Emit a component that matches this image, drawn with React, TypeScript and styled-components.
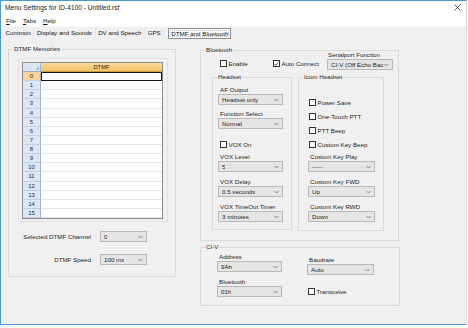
import React from 'react';
import styled, { createGlobalStyle } from 'styled-components';

const Global = createGlobalStyle`
  html, body { margin: 0; padding: 0; background: #ffffff; }
  body { font-family: "Liberation Sans", Arial, sans-serif; font-size: 6.2px; color: #1c1c1c; }
  * { box-sizing: border-box; }
`;

const Window = styled.div`
  width: 467px;
  height: 325px;
  border: 1px solid #4a98dc;
  border-right-color: #dcdcdc;
  display: flex;
  flex-direction: column;
  background: #f0f0f0;
  overflow: hidden;
`;

const TitleBar = styled.div`
  height: 12px;
  background: #fff;
  display: flex;
  align-items: center;
  justify-content: space-between;
  padding: 0 5px 0 4px;
  font-size: 6.6px;
  color: #222;
`;

const MenuBar = styled.div`
  height: 13px;
  background: #fff;
  display: flex;
  align-items: center;
  gap: 7px;
  padding: 1px 0 0 5px;
  color: #111;
  u { text-decoration: underline; text-underline-offset: 1px; }
`;

const TabStrip = styled.div`
  height: 13px;
  display: flex;
  align-items: flex-start;
  padding: 1px 0 0 2px;
  background: #f0f0f0;
  border-top: 1px solid #f7f7f7;
`;

const Tab = styled.div<{ $active?: boolean }>`
  height: 11px;
  line-height: 10px;
  padding: 0 2.6px;
  color: #111;
  ${(p) =>
    p.$active
      ? `margin-left: 4px; background: #fbfbfb; border: 1px solid #8e8e8e; padding: 0 2px; outline: 1px dotted #bbb; outline-offset: -3px;`
      : `border-right: 1px solid #e6e6e6;`}
`;

const Panel = styled.div`
  flex: 1;
  display: flex;
  align-items: flex-start;
  gap: 24px;
  padding: 6px 0 0 7px;
`;

const Group = styled.fieldset<{ $w: number; $h: number }>`
  margin: 0;
  min-width: 0;
  width: ${(p) => p.$w}px;
  height: ${(p) => p.$h}px;
  padding: 0;
  border: 1px solid #d9d9d9;
`;

const Legend = styled.legend`
  font-size: 6.2px;
  line-height: 8px;
  padding: 0 1px;
  margin-left: 4px;
  color: #1c1c1c;
`;

const GroupBody = styled.div<{ $pad: string }>`
  display: flex;
  flex-direction: column;
  padding: ${(p) => p.$pad};
`;

const GridFrame = styled.div`
  align-self: flex-start;
  border: 1px solid #e2e2e2;
  padding: 3px 4px 2px 3px;
`;

const DataGrid = styled.div`
  display: grid;
  grid-template-columns: 18px 121px;
  grid-template-rows: 9px repeat(16, 9.125px);
  border: 1px solid #8c8c8c;
  background: #fff;
  width: 141px;
`;

const CornerCell = styled.div`
  background: #dbe5f3;
  border-right: 1px solid #9fb0c6;
  border-bottom: 1px solid #9fb0c6;
  display: flex;
  justify-content: flex-end;
  align-items: flex-end;
  padding: 1px;
`;

const ColHeader = styled.div`
  background: linear-gradient(#f9d99c, #f3c163);
  border-bottom: 1px solid #c69b4b;
  text-align: center;
  line-height: 8px;
  font-size: 5.8px;
  color: #222;
`;

const RowHeader = styled.div<{ $sel?: boolean }>`
  background: ${(p) => (p.$sel ? '#f8d69a' : '#dce6f4')};
  border-right: 1px solid #9fb0c6;
  border-bottom: 1px solid #c4d0e2;
  text-align: center;
  line-height: 8px;
  font-size: 6px;
  color: #2a2a2a;
`;

const Cell = styled.div<{ $cur?: boolean }>`
  border-bottom: 1px solid #e6e6e6;
  ${(p) => (p.$cur ? 'border: 1.5px solid #111;' : '')}
`;

const FormRows = styled.div`
  display: grid;
  grid-template-columns: 73px 47px;
  column-gap: 9px;
  row-gap: 12px;
  margin-top: 9px;
  align-items: center;
`;

const RowLabel = styled.div`
  text-align: right;
  line-height: 8px;
`;

const SelectBox = styled.div<{ $w: number }>`
  width: ${(p) => p.$w}px;
  height: 11px;
  border: 1px solid #b8b8b8;
  background: #e5e5e5;
  display: flex;
  align-items: center;
  justify-content: space-between;
  padding: 0 3px 0 3px;
  line-height: 9px;
  color: #1c1c1c;
  white-space: nowrap;
  overflow: hidden;
  span { overflow: hidden; }
  svg { flex: none; }
`;

const Column = styled.div`
  display: flex;
  flex-direction: column;
  gap: 2px;
  margin-top: 1px;
`;

const TopRow = styled.div`
  display: flex;
  align-items: flex-end;
  margin-top: -3px;
  padding-left: 8px;
`;

const CheckRow = styled.div<{ $w?: number; $indent?: number; $lift?: number }>`
  display: flex;
  align-items: center;
  gap: 1.5px;
  height: 9px;
  flex: none;
  ${(p) => (p.$w ? `width: ${p.$w}px;` : '')}
  margin-left: ${(p) => p.$indent ?? 0}px;
  margin-bottom: ${(p) => p.$lift ?? 0}px;
`;

const Box = styled.span`
  width: 7px;
  height: 7px;
  border: 1px solid #333;
  background: #fff;
  display: inline-flex;
  align-items: center;
  justify-content: center;
  flex: none;
`;

const Field = styled.div`
  display: flex;
  flex-direction: column;
`;

const FieldLabel = styled.div<{ $indent?: number }>`
  line-height: 8px;
  padding-left: ${(p) => p.$indent ?? 2}px;
  white-space: nowrap;
`;

const SubRow = styled.div`
  display: flex;
  gap: 6px;
  margin-top: 3px;
`;

const Stack = styled.div<{ $gap: number; $top?: number }>`
  display: flex;
  flex-direction: column;
  gap: ${(p) => p.$gap}px;
  margin-top: ${(p) => p.$top ?? 0}px;
`;

const CivCols = styled.div`
  display: flex;
  gap: 25px;
  padding-left: 16px;
  padding-top: 2px;
`;

const Chevron = () => (
  <svg width="5" height="4" viewBox="0 0 5 4">
    <path d="M0.5 1 L2.5 3 L4.5 1" fill="none" stroke="#6a6a6a" strokeWidth="0.8" />
  </svg>
);

const Select = ({ w, value }: { w: number; value: string }) => (
  <SelectBox $w={w}>
    <span>{value}</span>
    <Chevron />
  </SelectBox>
);

const Check = ({
  label,
  checked,
  w,
  indent,
  lift,
}: {
  label: string;
  checked?: boolean;
  w?: number;
  indent?: number;
  lift?: number;
}) => (
  <CheckRow $w={w} $indent={indent} $lift={lift}>
    <Box>
      {checked && (
        <svg width="6" height="6" viewBox="0 0 6 6">
          <path d="M0.8 3 L2.3 4.6 L5.2 1" fill="none" stroke="#222" strokeWidth="0.9" />
        </svg>
      )}
    </Box>
    <span>{label}</span>
  </CheckRow>
);

const LabeledSelect = ({ label, value, w, indent }: { label: string; value: string; w: number; indent?: number }) => (
  <Field>
    <FieldLabel $indent={indent}>{label}</FieldLabel>
    <Select w={w} value={value} />
  </Field>
);

const rows = Array.from({ length: 16 }, (_, i) => i);

export default function App() {
  return (
    <>
      <Global />
      <Window>
        <TitleBar>
          <span>Menu Settings for ID-4100 - Untitled.rsf</span>
          <svg width="7" height="7" viewBox="0 0 7 7">
            <path d="M0.5 0.5 L6.5 6.5 M6.5 0.5 L0.5 6.5" stroke="#333" strokeWidth="0.8" />
          </svg>
        </TitleBar>
        <MenuBar>
          <span><u>F</u>ile</span>
          <span><u>T</u>abs</span>
          <span><u>H</u>elp</span>
        </MenuBar>
        <TabStrip>
          <Tab>Common</Tab>
          <Tab>Display and Sounds</Tab>
          <Tab>DV and Speech</Tab>
          <Tab>GPS</Tab>
          <Tab $active>DTMF and Bluetooth</Tab>
        </TabStrip>
        <Panel>
          <Group $w={168} $h={232}>
            <Legend>DTMF Memories</Legend>
            <GroupBody $pad="5px 0 0 9px">
              <GridFrame>
                <DataGrid>
                  <CornerCell>
                    <svg width="4" height="4" viewBox="0 0 4 4">
                      <path d="M4 0 L4 4 L0 4 Z" fill="#a9b8cc" />
                    </svg>
                  </CornerCell>
                  <ColHeader>DTMF</ColHeader>
                  {rows.map((r) => (
                    <React.Fragment key={r}>
                      <RowHeader $sel={r === 0}>{r}</RowHeader>
                      <Cell $cur={r === 0} />
                    </React.Fragment>
                  ))}
                </DataGrid>
              </GridFrame>
              <FormRows>
                <RowLabel>Selected DTMF Channel</RowLabel>
                <Select w={47} value="0" />
                <RowLabel>DTMF Speed</RowLabel>
                <Select w={47} value="100 ms" />
              </FormRows>
            </GroupBody>
          </Group>

          <Column>
            <Group $w={199} $h={195}>
              <Legend>Bluetooth</Legend>
              <GroupBody $pad="0 0 0 11px">
                <TopRow>
                  <Check label="Enable" w={53} lift={2} />
                  <Check label="Auto Connect" checked w={54} lift={2} />
                  <Field>
                    <FieldLabel $indent={1}>Serialport Function</FieldLabel>
                    <Select w={66} value="CI-V (Off Echo Bac" />
                  </Field>
                </TopRow>
                <SubRow>
                  <Group $w={80} $h={157}>
                    <Legend>Headset</Legend>
                    <GroupBody $pad="5px 0 0 5px">
                      <Stack $gap={5}>
                        <LabeledSelect label="AF Output" value="Headset only" w={65} />
                        <LabeledSelect label="Function Select" value="Normal" w={65} />
                      </Stack>
                      <Stack $gap={0} $top={11}>
                        <Check label="VOX On" indent={2} />
                      </Stack>
                      <Stack $gap={6} $top={4}>
                        <LabeledSelect label="VOX Level" value="5" w={65} />
                        <LabeledSelect label="VOX Delay" value="0.5 seconds" w={65} />
                        <LabeledSelect label="VOX TimeOut Timer" value="3 minutes" w={65} />
                      </Stack>
                    </GroupBody>
                  </Group>
                  <Group $w={86} $h={158}>
                    <Legend>Icom Headset</Legend>
                    <GroupBody $pad="17px 0 0 9px">
                      <Stack $gap={5}>
                        <Check label="Power Save" indent={1} />
                        <Check label="One-Touch PTT" indent={1} />
                        <Check label="PTT Beep" indent={1} />
                        <Check label="Custom Key Beep" indent={1} />
                      </Stack>
                      <Stack $gap={6} $top={4}>
                        <LabeledSelect label="Custom Key Play" value="-----" w={67} />
                        <LabeledSelect label="Custom Key FWD" value="Up" w={67} />
                        <LabeledSelect label="Custom Key RWD" value="Down" w={67} />
                      </Stack>
                    </GroupBody>
                  </Group>
                </SubRow>
              </GroupBody>
            </Group>

            <Group $w={200} $h={63}>
              <Legend>CI-V</Legend>
              <CivCols>
                <Stack $gap={6}>
                  <LabeledSelect label="Address" value="9Ah" w={65} />
                  <LabeledSelect label="Bluetooth" value="01h" w={65} />
                </Stack>
                <Stack $gap={0} $top={3}>
                  <LabeledSelect label="Baudrate" value="Auto" w={67} />
                  <Stack $gap={0} $top={12}>
                    <Check label="Transceive" indent={1} />
                  </Stack>
                </Stack>
              </CivCols>
            </Group>
          </Column>
        </Panel>
      </Window>
    </>
  );
}
